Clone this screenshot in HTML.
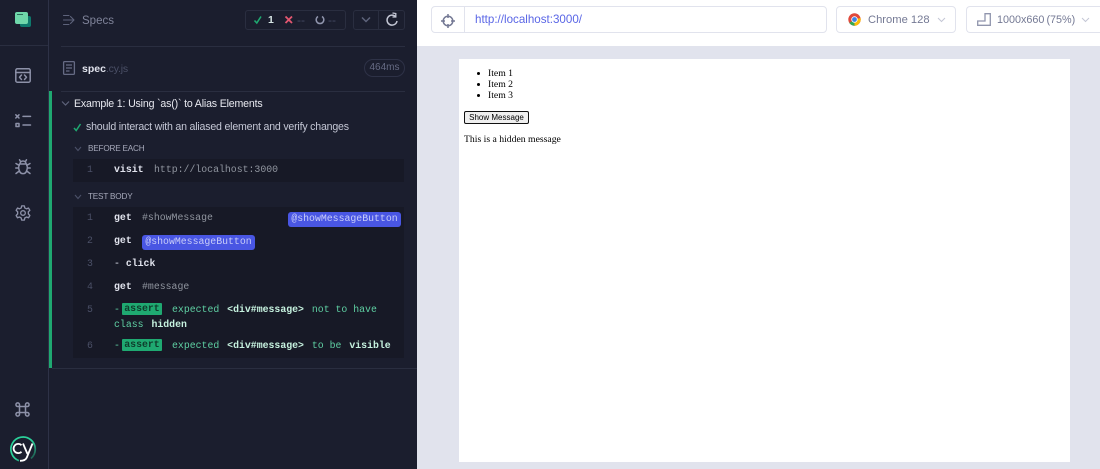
<!DOCTYPE html>
<html><head><meta charset="utf-8"><style>
*{box-sizing:border-box}
html,body{margin:0;padding:0;width:1100px;height:469px;overflow:hidden;background:#fff}
body{position:relative;font-family:"Liberation Sans",sans-serif}
.a,.t,.m{position:absolute}
.t,.m{white-space:nowrap}
.t{font-size:11px;line-height:14px}
.m{font-family:"Liberation Mono",monospace;font-size:9.85px;line-height:14px}
.n{color:#4b5067;left:87px}
.k{color:#e1e3ed;font-weight:bold;left:114px}
.g{color:#90959f}
.gr{color:#5fd0a3}
.pill{background:#4956e3;color:#c9cdf8;border-radius:3px;height:15px;line-height:14px;text-align:center}
.as{background:#1fa971;color:#0f3d2c;font-weight:bold;border-radius:1px;height:12px;line-height:12px;width:40px;text-align:center}
svg{position:absolute;overflow:visible}
.ic{fill:none;stroke:#8d91a8;stroke-width:1.5;stroke-linecap:round;stroke-linejoin:round}
</style></head><body>
<div class="a" style="left:0;top:0;width:417px;height:469px;background:#1b1e2e"></div>
<div class="a" style="left:48px;top:0;width:1px;height:469px;background:#2e3247"></div>
<div class="a" style="left:0;top:45px;width:48px;height:1px;background:#2a2e40"></div>
<div class="a" style="left:61px;top:46px;width:344px;height:1px;background:#2a2e40"></div>
<div class="a" style="left:61px;top:91px;width:344px;height:1px;background:#2a2e40"></div>

<!-- logo -->
<div class="a" style="left:20px;top:16px;width:11px;height:11px;background:#0e7a6d;border-radius:2px"></div>
<div class="a" style="left:15px;top:12px;width:13px;height:12px;background:#6fd8aa;border-radius:2px"></div>
<div class="a" style="left:17px;top:14px;width:6px;height:1px;background:#2a6e5a"></div>

<!-- nav icons -->
<svg style="left:15px;top:68px" width="16" height="15" viewBox="0 0 16 15" class="ic"><rect x=".8" y=".8" width="14.400" height="13.400" rx="1.500"/><path d="M.8 4.500H15.200M6.500 7L4.500 9.300L6.500 11.500M9.500 7L11.500 9.300L9.500 11.500"/></svg>
<svg style="left:15px;top:114px" width="16" height="14" viewBox="0 0 16 14" class="ic"><path d="M.8 .8L4 4M4 .8L.8 4M8 2.400H15.500M1 9.500H4V12.500H1ZM8 11H15.500"/></svg>
<svg style="left:15px;top:159px" width="16" height="16" viewBox="0 0 16 16" class="ic"><path d="M5 5C5 1 11 1 11 5M4.500 5H11.500C12.500 7 12.500 10 11.500 12C10.500 15.500 5.500 15.500 4.500 12C3.500 10 3.500 7 4.500 5ZM4.300 6.500L1 4.500M11.700 6.500L15 4.500M3.800 9H.8M12.200 9H15.200M4.300 12L1 14.500M11.700 12L15 14.500M5.500 2.500L4.500 .8M10.500 2.500L11.500 .8"/></svg>
<svg style="left:15px;top:205px" width="16" height="16" viewBox="0 0 18 18" class="ic" style="stroke-width:1.700"><path d="M7.500 1H10.500L11 3.300L13 4.300L15.200 3.400L16.700 6L15 7.600V10L16.700 11.800L15.200 14.400L13 13.500L11 14.600L10.500 17H7.500L7 14.600L5 13.500L2.800 14.400L1.300 11.800L3 10V7.600L1.300 6L2.800 3.400L5 4.300L7 3.300Z"/><circle cx="9" cy="9" r="2.600"/></svg>
<svg style="left:15px;top:402px" width="15" height="15" viewBox="0 0 15 15" class="ic"><path d="M4.500 4.500H10.500V10.500H4.500ZM4.500 4.500H3A1.800 1.800 0 1 1 4.500 3ZM10.500 4.500V3A1.800 1.800 0 1 1 12 4.500ZM10.500 10.500H12A1.800 1.800 0 1 1 10.500 12ZM4.500 10.500V12A1.800 1.800 0 1 1 3 10.500Z"/></svg>
<svg style="left:10px;top:436px" width="26" height="26" viewBox="0 0 26 26" fill="none"><defs><linearGradient id="cg" x1="0" y1="0" x2="1" y2="1"><stop offset=".55" stop-color="#2bd19a"/><stop offset="1" stop-color="#1b3a3a"/></linearGradient></defs><path d="M21 22.500A12.200 12.200 0 1 0 9 24.700" stroke="url(#cg)" stroke-width="1.700"/><path d="M11.500 9.300A4.600 4.600 0 1 0 11.500 15.700" stroke="#fff" stroke-width="1.800"/><path d="M13 7.500L17.500 18M22.500 7.500L16.800 21.500C16 23.500 14 24.800 10 24.800" stroke="#fff" stroke-width="1.800"/></svg>

<!-- header -->
<svg style="left:63px;top:14px" width="12" height="12" viewBox="0 0 12 12" fill="none" stroke="#5e637b" stroke-width="1.100" stroke-linecap="round" stroke-linejoin="round"><path d="M.5 1.500H6M.5 6H11M.5 10.500H6M7.500 2.500L11 6L7.500 9.500"/></svg>
<div class="t" style="left:82px;top:14px;font-size:11.500px;color:#7f8399">Specs</div>

<div class="a" style="left:245px;top:10px;width:101px;height:20px;border:1px solid #2a2e40;border-radius:3px"></div>
<svg style="left:253px;top:15px" width="10" height="10" viewBox="0 0 10 10" fill="none" stroke="#1fa971" stroke-width="1.600"><path d="M1.500 5.500L3.800 8L8 1.500"/></svg>
<div class="t" style="left:268px;top:13px;font-size:10.500px;font-weight:bold;color:#d7e6e6">1</div>
<svg style="left:284px;top:15px" width="10" height="10" viewBox="0 0 10 10" fill="none" stroke="#e45770" stroke-width="1.800"><path d="M1.500 1.500L8 8M8 1.500L1.500 8"/></svg>
<div class="t" style="left:297px;top:13px;font-size:12px;color:#434861">--</div>
<svg style="left:315px;top:15px" width="10" height="10" viewBox="0 0 10 10" fill="none" stroke="#9095ad" stroke-width="1.500"><path d="M3 1.500A3.800 3.800 0 1 0 7 1.500"/></svg>
<div class="t" style="left:328px;top:13px;font-size:12px;color:#434861">--</div>

<div class="a" style="left:353px;top:10px;width:52px;height:20px;border:1px solid #2a2e40;border-radius:3px"></div>
<div class="a" style="left:378px;top:10px;width:1px;height:20px;background:#2a2e40"></div>
<svg style="left:361px;top:16px" width="10" height="8" viewBox="0 0 10 8" fill="none" stroke="#5e637b" stroke-width="1.500"><path d="M1 1.500L5 5.500L9 1.500"/></svg>
<svg style="left:385px;top:12px" width="14" height="15" viewBox="0 0 14 15" fill="none" stroke="#c4c7d5" stroke-width="1.500"><path d="M10.800 4.800A5 5 0 1 0 12 9"/><path d="M7.500 1L10.800 1.500V5H7.500" stroke-width="1.300"/></svg>

<!-- spec -->
<svg style="left:63px;top:61px" width="12" height="14" viewBox="0 0 12 14" fill="none" stroke="#666b84" stroke-width="1.300"><rect x=".6" y=".6" width="10.800" height="12.800" rx="1"/><path d="M3 4H9M3 7H9M3 10H6.500"/></svg>
<div class="t" style="left:82px;top:62px;font-size:10.500px;font-weight:bold;color:#e1e3ed">spec<span style="font-weight:normal;color:#4b5067;letter-spacing:-.2px">.cy.js</span></div>
<div class="a" style="left:364px;top:59px;width:41px;height:18px;border:1px solid #2e3247;border-radius:9px;text-align:center;font-size:10px;line-height:16px;color:#666b84">464ms</div>

<!-- suite -->
<div class="a" style="left:49px;top:91px;width:3px;height:277px;background:#1fa971"></div>
<div class="a" style="left:52px;top:368px;width:365px;height:1px;background:#2a2e40"></div>
<svg style="left:61px;top:100px" width="9" height="7" viewBox="0 0 9 7" fill="none" stroke="#5e637b" stroke-width="1.200"><path d="M1 1.500L4.500 5L8 1.500"/></svg>
<div class="t" style="left:74px;top:97px;font-size:10.600px;letter-spacing:-.17px;color:#e8e9f0">Example 1: Using `as()` to Alias Elements</div>

<svg style="left:73px;top:123px" width="9" height="9" viewBox="0 0 9 9" fill="none" stroke="#1fa971" stroke-width="1.500"><path d="M1 5L3.200 7.500L7.500 1"/></svg>
<div class="t" style="left:86px;top:120px;font-size:10.600px;letter-spacing:-.2px;color:#c4c7d5">should interact with an aliased element and verify changes</div>

<svg style="left:74px;top:146px" width="8" height="6" viewBox="0 0 8 6" fill="none" stroke="#4b5067" stroke-width="1.100"><path d="M1 1L4 4.500L7 1"/></svg>
<div class="t" style="left:88px;top:142px;font-size:8.200px;letter-spacing:-.2px;color:#a6a9ba">BEFORE EACH</div>
<div class="a" style="left:73px;top:159px;width:331px;height:23px;background:#171926"></div>
<div class="m n" style="top:163px">1</div>
<div class="m k" style="top:163px">visit</div>
<div class="m g" style="left:154px;top:163px">http://localhost:3000</div>

<svg style="left:74px;top:194px" width="8" height="6" viewBox="0 0 8 6" fill="none" stroke="#4b5067" stroke-width="1.100"><path d="M1 1L4 4.500L7 1"/></svg>
<div class="t" style="left:88px;top:190px;font-size:8.200px;letter-spacing:-.2px;color:#a6a9ba">TEST BODY</div>
<div class="a" style="left:73px;top:207px;width:331px;height:151px;background:#171926"></div>

<div class="m n" style="top:211px">1</div>
<div class="m k" style="top:211px">get</div>
<div class="m g" style="left:142px;top:211px">#showMessage</div>
<div class="m pill" style="left:288px;top:212px;width:113px">@showMessageButton</div>

<div class="m n" style="top:234px">2</div>
<div class="m k" style="top:234px">get</div>
<div class="m pill" style="left:142px;top:235px;width:113px">@showMessageButton</div>

<div class="m n" style="top:257px">3</div>
<div class="m k" style="top:257px"><span style="font-weight:normal">-</span> click</div>

<div class="m n" style="top:280px">4</div>
<div class="m k" style="top:280px">get</div>
<div class="m g" style="left:142px;top:280px">#message</div>

<div class="m n" style="top:303px">5</div>
<div class="m gr" style="left:114px;top:303px">-</div>
<div class="m as" style="left:122px;top:303px">assert</div>
<div class="m gr" style="left:172px;top:303px">expected <b style="color:#c6f2df;margin-left:2px">&lt;div#message&gt;</b> <span style="margin-left:2px">not to have</span></div>
<div class="m gr" style="left:114px;top:318px">class <b style="color:#c6f2df;margin-left:2px">hidden</b></div>

<div class="m n" style="top:339px">6</div>
<div class="m gr" style="left:114px;top:339px">-</div>
<div class="m as" style="left:122px;top:339px">assert</div>
<div class="m gr" style="left:172px;top:339px">expected <b style="color:#c6f2df;margin-left:2px">&lt;div#message&gt;</b> <span style="margin-left:2px">to be</span> <b style="color:#c6f2df;margin-left:2px">visible</b></div>

<!-- right -->
<div class="a" style="left:417px;top:46px;width:683px;height:423px;background:#e1e3ed"></div>
<div class="a" style="left:431px;top:6px;width:396px;height:27px;border:1px solid #e1e3ed;border-radius:4px"></div>
<div class="a" style="left:464px;top:7px;width:1px;height:25px;background:#e1e3ed"></div>
<svg style="left:441px;top:14px" width="14" height="14" viewBox="0 0 14 14" fill="none" stroke="#747994" stroke-width="1.500"><circle cx="7" cy="7" r="4.800"/><path d="M7 0V4M7 10V14M0 7H4M10 7H14"/></svg>
<div class="t" style="left:475px;top:13px;font-size:11.600px;color:#5a66e6">http://localhost:3000/</div>

<div class="a" style="left:836px;top:6px;width:120px;height:27px;border:1px solid #e1e3ed;border-radius:4px"></div>
<svg style="left:848px;top:13px" width="13" height="13" viewBox="0 0 13 13"><circle cx="6.500" cy="6.500" r="6.200" fill="#e0493c"/><path d="M6.500 6.500L1.300 10A6.200 6.200 0 0 0 6.500 12.700Z" fill="#34a853"/><path d="M6.500 6.500L12.500 5A6.200 6.200 0 0 1 6.500 12.700Z" fill="#fbbc05"/><circle cx="6.500" cy="6.500" r="3.200" fill="#fff"/><circle cx="6.500" cy="6.500" r="2.400" fill="#3b82e6"/></svg>
<div class="t" style="left:868px;top:13px;font-size:11.200px;color:#747994">Chrome 128</div>
<svg style="left:937px;top:17px" width="9" height="6" viewBox="0 0 9 6" fill="none" stroke="#c4c7d5" stroke-width="1"><path d="M1 1L4.500 4.500L8 1"/></svg>

<div class="a" style="left:966px;top:6px;width:134px;height:27px;border:1px solid #e1e3ed;border-right:0;border-radius:4px 0 0 4px"></div>
<svg style="left:977px;top:13px" width="14" height="13" viewBox="0 0 14 13" fill="none" stroke="#9095ad" stroke-width="1.300"><path d="M.7 12.300V8H8V.7H13.300V12.300Z"/></svg>
<div class="t" style="left:997px;top:13px;font-size:10.800px;color:#747994">1000x660<span style="margin-left:2px">(75%)</span></div>
<svg style="left:1081px;top:17px" width="9" height="6" viewBox="0 0 9 6" fill="none" stroke="#c4c7d5" stroke-width="1"><path d="M1 1L4.500 4.500L8 1"/></svg>

<!-- AUT -->
<div class="a" style="left:459px;top:59px;width:611px;height:403px;background:#fff;font-family:'Liberation Serif',serif;color:#000;font-size:9.700px;line-height:11px">
<div class="a" style="left:29px;top:9px;white-space:nowrap">Item 1</div>
<div class="a" style="left:29px;top:20px;white-space:nowrap">Item 2</div>
<div class="a" style="left:29px;top:31px;white-space:nowrap">Item 3</div>
<div class="a" style="left:18px;top:13px;width:3px;height:3px;border-radius:50%;background:#000"></div>
<div class="a" style="left:18px;top:24px;width:3px;height:3px;border-radius:50%;background:#000"></div>
<div class="a" style="left:18px;top:35px;width:3px;height:3px;border-radius:50%;background:#000"></div>
<div class="a" style="left:5px;top:52px;width:65px;height:13px;background:#efefef;border:1px solid #111;border-radius:2px;font-family:'Liberation Sans',sans-serif;font-size:8px;line-height:11px;text-align:center;white-space:nowrap">Show Message</div>
<div class="a" style="left:5px;top:75px;white-space:nowrap">This is a hidden message</div>
</div>
</body></html>
